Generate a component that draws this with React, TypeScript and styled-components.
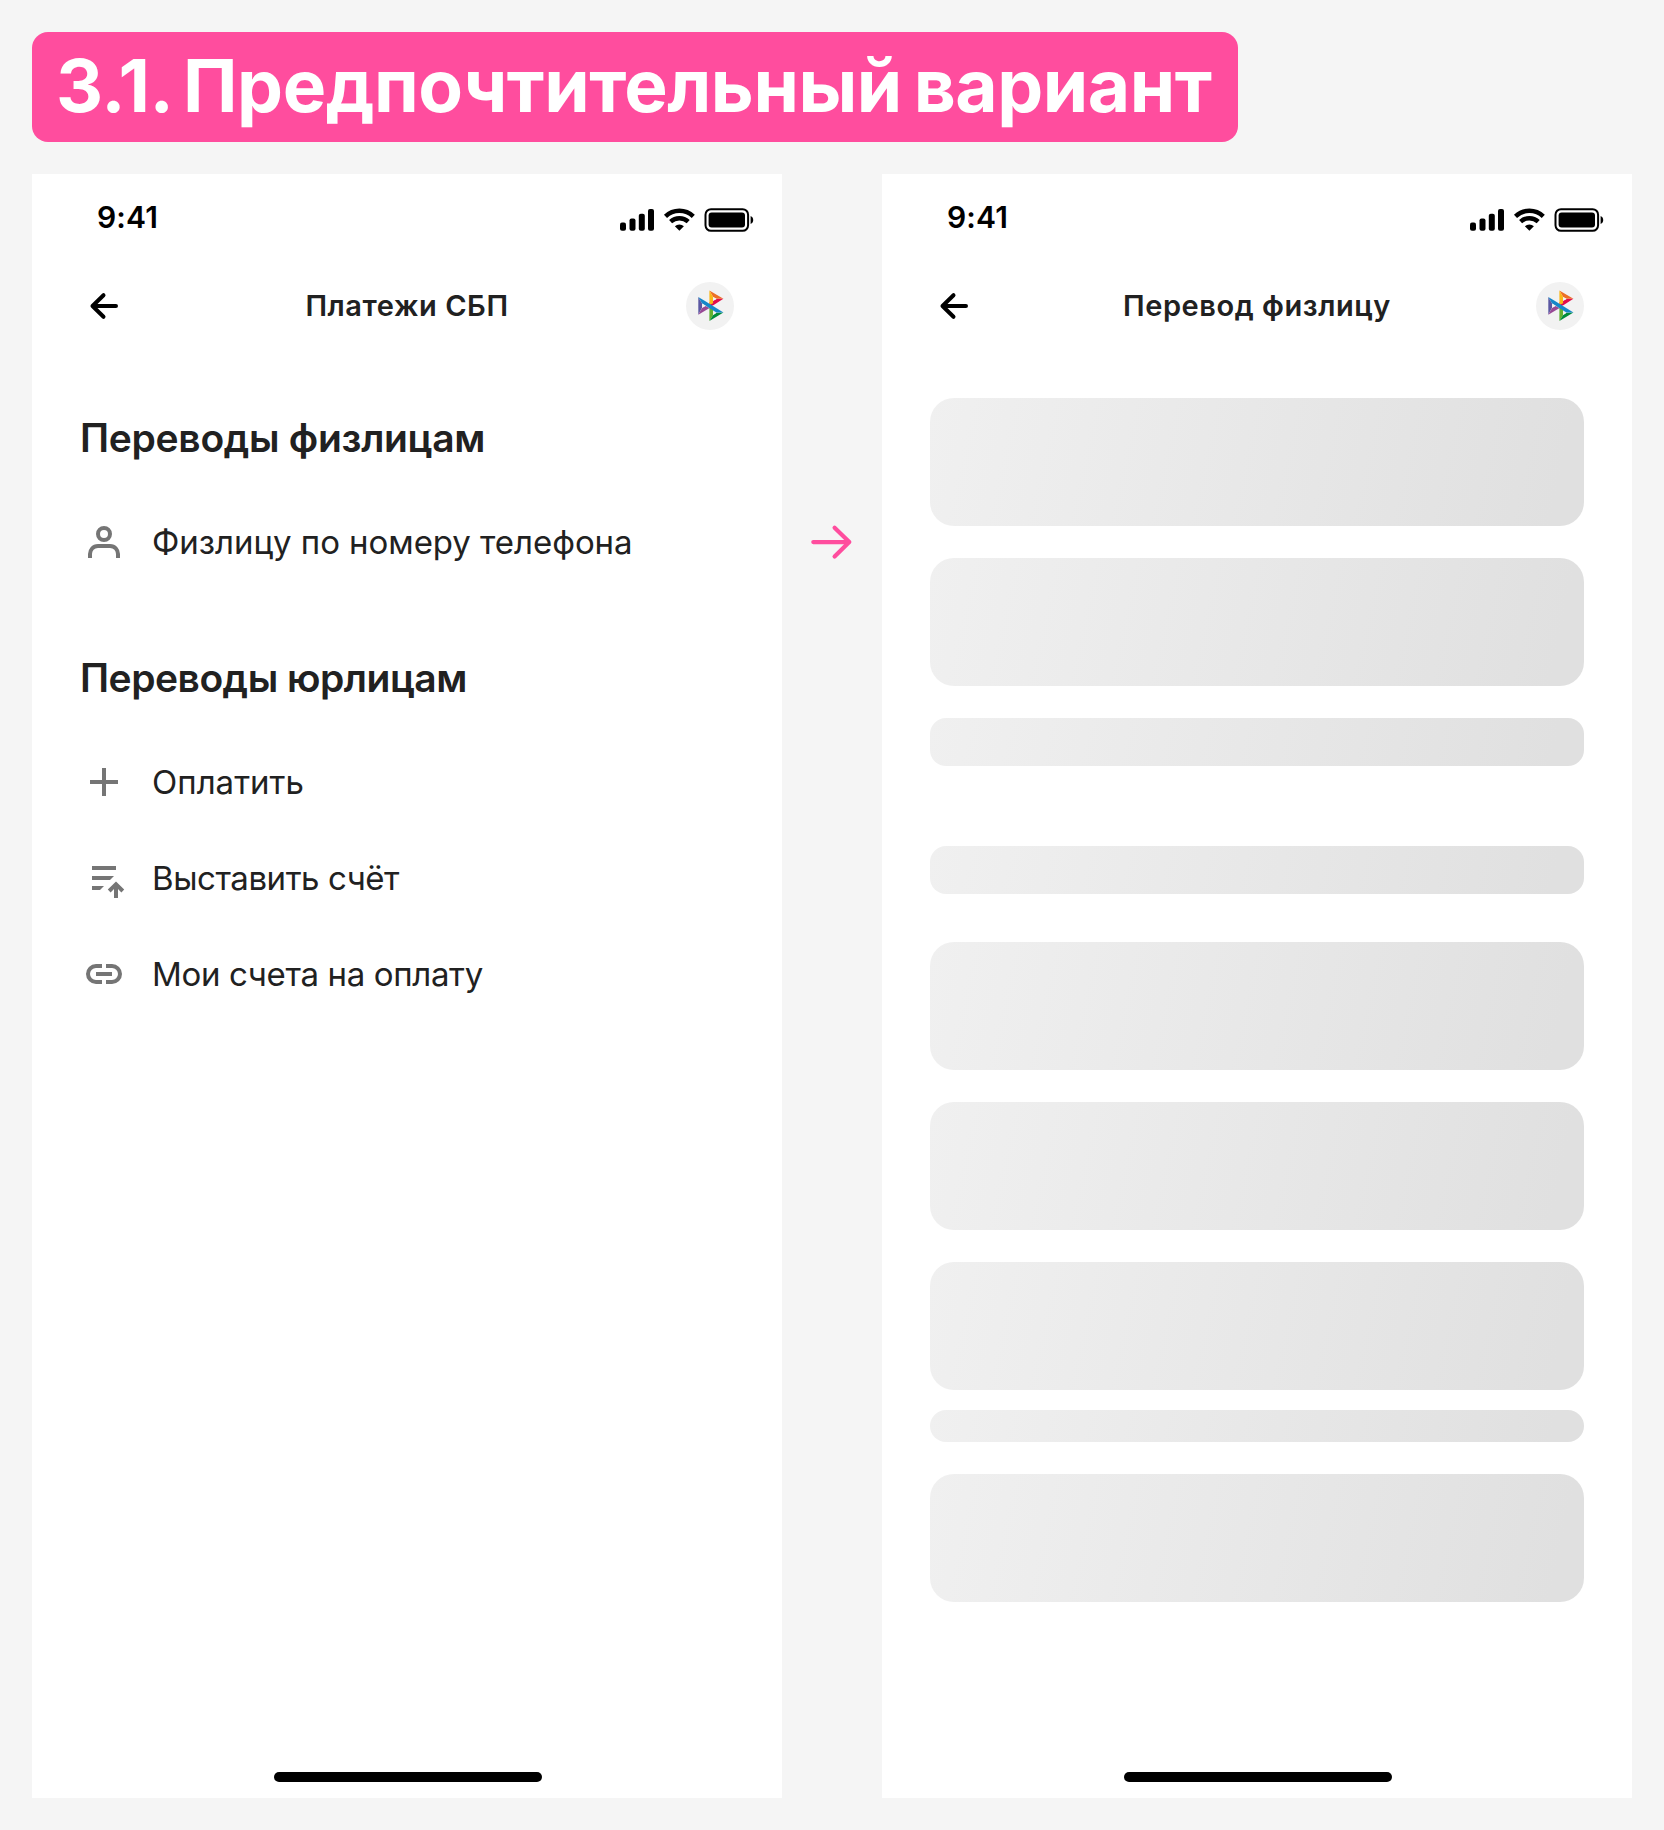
import React from 'react';
import styled, { createGlobalStyle } from 'styled-components';

const GlobalStyle = createGlobalStyle`
  * { box-sizing: border-box; }
  body { margin: 0; background: #f5f5f5; font-family: Inter, "Liberation Sans", sans-serif; }
`;

const Board = styled.main`
  display: flex;
  flex-direction: column;
  align-items: flex-start;
  gap: 32px;
  width: 1664px;
  height: 1830px;
  padding: 32px;
  background: #f5f5f5;
`;

const BoardTitle = styled.h1`
  margin: 0;
  width: 1206px;
  height: 110px;
  padding: 0 24px;
  border-radius: 16px;
  background: #ff4d9e;
  color: #fff;
  font-size: 73px;
  font-weight: 700;
  line-height: 108px;
  letter-spacing: -0.45px;
  word-spacing: -5px;
  white-space: nowrap;
`;

const Screens = styled.div`
  display: flex;
`;

const Connector = styled.div`
  display: flex;
  justify-content: center;
  width: 100px;
  padding-top: 344px;
`;

const Phone = styled.section`
  display: flex;
  flex-direction: column;
  width: 750px;
  height: 1624px;
  background: #fff;
`;

const StatusBar = styled.div`
  display: flex;
  justify-content: space-between;
  height: 88px;
  padding: 0 28px 0 65px;
`;

const Clock = styled.time`
  padding-top: 25px;
  color: #000;
  font-size: 30px;
  font-weight: 600;
  line-height: 36px;
  letter-spacing: 0.15px;
`;

const StatusIcons = styled.div`
  display: flex;
  padding-top: 34px;
`;

const NavBar = styled.header`
  display: flex;
  align-items: center;
  justify-content: space-between;
  height: 88px;
  padding: 0 48px;
`;

const NavTitle = styled.h2`
  margin: 0;
  color: #212121;
  font-size: 29px;
  font-weight: 600;
  line-height: 40px;
  letter-spacing: 0.55px;
`;

const LogoBadge = styled.div`
  display: flex;
  align-items: center;
  justify-content: center;
  width: 48px;
  height: 48px;
  border-radius: 50%;
  background: #f2f2f2;
`;

const Menu = styled.div`
  display: flex;
  flex: 1;
  flex-direction: column;
  gap: 48px;
  padding: 48px 48px 0;
`;

const Group = styled.div`
  display: flex;
  flex-direction: column;
`;

const GroupTitle = styled.h3<{ $tracking: number }>`
  margin: 0;
  height: 96px;
  color: #212121;
  font-size: 39px;
  font-weight: 600;
  line-height: 80px;
  letter-spacing: ${({ $tracking }) => $tracking}px;
`;

const MenuItem = styled.div<{ $tracking: number }>`
  display: flex;
  align-items: center;
  gap: 24px;
  height: 96px;
  color: #212121;
  font-size: 33px;
  line-height: 48px;
  letter-spacing: ${({ $tracking }) => $tracking}px;
`;

const Skeletons = styled.div`
  display: flex;
  flex: 1;
  flex-direction: column;
  padding: 48px 48px 0;
`;

const Skeleton = styled.div<{ $height: number; $gap: number }>`
  height: ${({ $height }) => $height}px;
  margin-bottom: ${({ $gap }) => $gap}px;
  border-radius: ${({ $height }) => ($height > 48 ? 24 : 16)}px;
  background: linear-gradient(102deg, #f0f0f0 0%, #e0e0e0 95%);
`;

const HomeIndicator = styled.div`
  align-self: center;
  width: 268px;
  height: 10px;
  margin: 0 0 16px 2px;
  border-radius: 5px;
  background: #000;
`;

const Glyph = styled.svg`
  display: block;
  flex: none;
  overflow: visible;
`;

const StatusGlyphs = () => (
  <Glyph width="134" height="24" viewBox="0 0 134 24">
    <rect x="0" y="14.5" width="6" height="8.3" rx="2" />
    <rect x="9.5" y="10.5" width="6" height="12.3" rx="2" />
    <rect x="18.8" y="5.7" width="6" height="17.1" rx="2" />
    <rect x="28" y="1" width="6" height="21.8" rx="2" />
    <g fill="none" stroke="#000" strokeWidth="4.4">
      <path d="M45.5 8.3 A20 20 0 0 1 73.3 8.3" />
      <path d="M50.6 13.7 A12.8 12.8 0 0 1 68.2 13.7" />
    </g>
    <path d="M59.4 22.8 L54.9 18.2 A6.5 6.5 0 0 1 63.9 18.2 Z" />
    <rect x="85.5" y="1.2" width="42.6" height="21.6" rx="5.5" fill="none" stroke="#000" strokeWidth="2" />
    <rect x="88.6" y="4.5" width="36.4" height="15" rx="3" />
    <path d="M130.6 8 C134.1 9.2 134.1 14.8 130.6 16 Z" />
  </Glyph>
);

const BackIcon = () => (
  <Glyph width="48" height="48" viewBox="0 0 48 48" fill="none" stroke="#000" strokeWidth="4" strokeLinecap="round" strokeLinejoin="round">
    <path d="M36 24H12.5M23.5 13.2L12.5 24L23.5 34.8" />
  </Glyph>
);

const SbpLogo = () => (
  <Glyph width="26" height="32" viewBox="-1.1 0 26 32">
    <path d="M.2 7L4 13.5V17.5L.2 24.8Z" fill="#5b57a2" />
    <path d="M25.3 8.8L18.5 8.8L15 7L11.3 .5Z" fill="#ed6f26" />
    <path d="M11.3 12.5L18.4 8.9L25.3 8.8L15.6 14.9L11.3 17Z" fill="#e20c4b" />
    <path d="M11.3 .5L15 7V13.2L11.3 15Z" fill="#fab718" />
    <path d="M15 7V10.9L18.4 8.9Z" fill="#f2f2f2" />
    <path d="M11.3 14.8L15 17V25L11.3 31Z" fill="#63b22f" />
    <path d="M25.3 22.4L11.3 31L15 25L18.4 22.7Z" fill="#008c3a" />
    <path d="M15 20.8V24.9L18.4 22.7Z" fill="#f2f2f2" />
    <path d="M.2 24.8L4 17.8L7.3 16L11.5 18Z" fill="#984995" />
    <path d="M.2 7L7.3 11.3L25.3 22.4H18.3L4 13.5Z" fill="#1487c9" />
    <path d="M4 13.5L7.6 15.7L4 17.9Z" fill="#f2f2f2" />
  </Glyph>
);

const PersonIcon = () => (
  <Glyph width="48" height="48" viewBox="0 0 48 48" fill="none" stroke="#757575" strokeWidth="4">
    <circle cx="24" cy="16" r="6" />
    <path d="M10 40V36C10 32 13 28 18 28H30C35 28 38 32 38 36V40" />
  </Glyph>
);

const PlusIcon = () => (
  <Glyph width="48" height="48" viewBox="0 0 48 48" fill="none" stroke="#757575" strokeWidth="4">
    <path d="M10 24H38M24 10V38" />
  </Glyph>
);

const InvoiceIcon = () => (
  <Glyph width="48" height="48" viewBox="0 0 48 48" fill="#757575">
    <path d="M12 12H36V16H12ZM12 22H34L30 26H12ZM12 32H24L20 36H12Z" />
    <path d="M36 27.5L44.2 35.6L41.4 38.4L38 35.1V44H34V35.1L30.6 38.4L27.8 35.6Z" />
  </Glyph>
);

const LinkIcon = () => (
  <Glyph width="48" height="48" viewBox="0 0 48 48" fill="none" stroke="#757575" strokeWidth="4">
    <path d="M22 16H16A8 8 0 0 0 16 32H22M26 16H32A8 8 0 0 1 32 32H26M16 24H32" />
  </Glyph>
);

const NextArrow = () => (
  <Glyph width="48" height="48" viewBox="0 0 48 48" fill="none" stroke="#ff4d9e" strokeWidth="4.2" strokeLinecap="round" strokeLinejoin="round">
    <path d="M5.3 24.1H41.3M26.6 9.8L41.3 24.1L26.6 38.6" />
  </Glyph>
);

const Screen = ({ title, children }: { title: string; children: React.ReactNode }) => (
  <Phone>
    <StatusBar>
      <Clock>9:41</Clock>
      <StatusIcons><StatusGlyphs /></StatusIcons>
    </StatusBar>
    <NavBar>
      <BackIcon />
      <NavTitle>{title}</NavTitle>
      <LogoBadge><SbpLogo /></LogoBadge>
    </NavBar>
    {children}
    <HomeIndicator />
  </Phone>
);

const groups = [
  {
    title: 'Переводы физлицам',
    tracking: -0.3,
    items: [{ Icon: PersonIcon, label: 'Физлицу по номеру телефона', tracking: -0.05 }],
  },
  {
    title: 'Переводы юрлицам',
    tracking: -0.5,
    items: [
      { Icon: PlusIcon, label: 'Оплатить', tracking: 0 },
      { Icon: InvoiceIcon, label: 'Выставить счёт', tracking: -0.45 },
      { Icon: LinkIcon, label: 'Мои счета на оплату', tracking: -0.35 },
    ],
  },
];

const skeletons = [
  [128, 32], [128, 32], [48, 80], [48, 48], [128, 32], [128, 32], [128, 20], [32, 32], [128, 0],
];

export default function App() {
  return (
    <>
      <GlobalStyle />
      <Board>
        <BoardTitle>3.1. Предпочтительный вариант</BoardTitle>
        <Screens>
          <Screen title="Платежи СБП">
            <Menu>
              {groups.map((group) => (
                <Group key={group.title}>
                  <GroupTitle $tracking={group.tracking}>{group.title}</GroupTitle>
                  {group.items.map(({ Icon, label, tracking }) => (
                    <MenuItem key={label} $tracking={tracking}><Icon />{label}</MenuItem>
                  ))}
                </Group>
              ))}
            </Menu>
          </Screen>
          <Connector><NextArrow /></Connector>
          <Screen title="Перевод физлицу">
            <Skeletons>
              {skeletons.map(([height, gap], index) => (
                <Skeleton key={index} $height={height} $gap={gap} />
              ))}
            </Skeletons>
          </Screen>
        </Screens>
      </Board>
    </>
  );
}
